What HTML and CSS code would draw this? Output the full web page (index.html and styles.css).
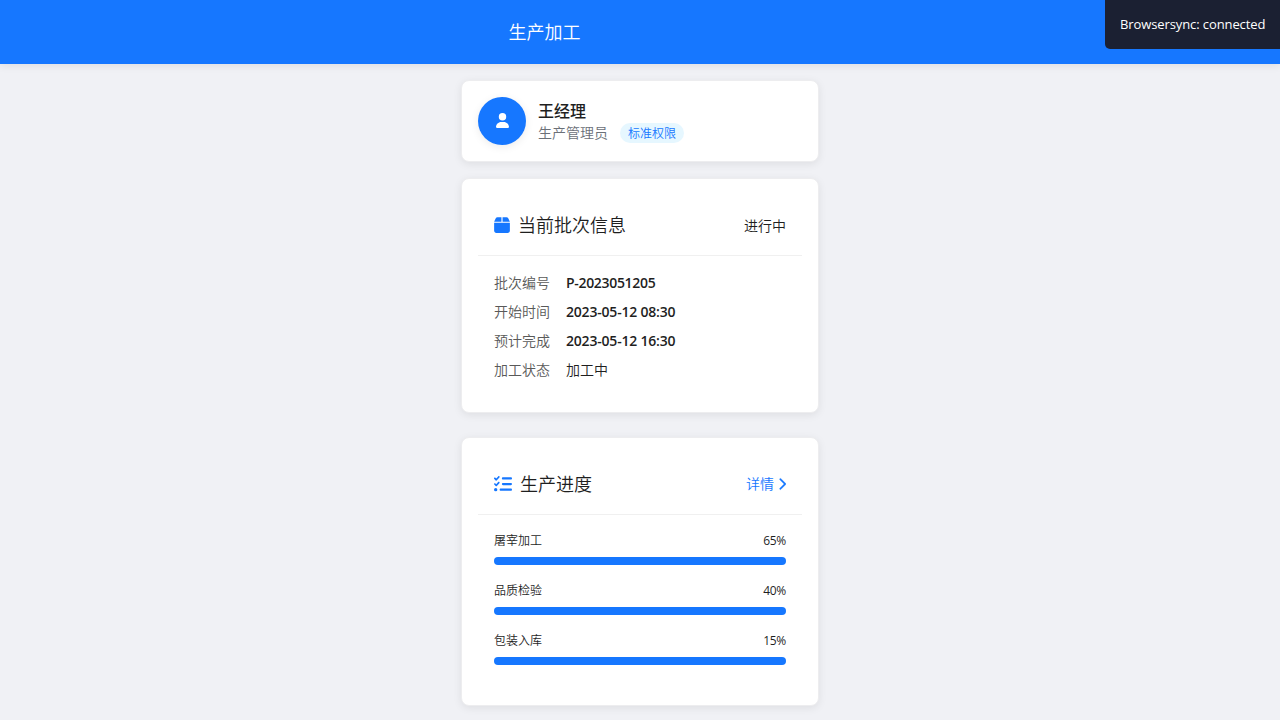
FILE: index.html
```html
<!DOCTYPE html>
<html lang="zh-CN">
<head>
<meta charset="UTF-8">
<title>生产加工</title>
<link rel="stylesheet" href="styles.css">
</head>
<body>
<header class="topbar"><h1 class="topbar-title">生产加工</h1></header>
<div class="sync-notice">Browsersync: connected</div>
<main class="content">
  <section class="card user-card">
    <div class="avatar">
      <svg class="icon-user" viewBox="0 0 448 512"><path d="M224 256A128 128 0 1 0 224 0a128 128 0 1 0 0 256zm-45.700 48C79.800 304 0 383.800 0 482.300C0 498.700 13.300 512 29.700 512H418.300c16.400 0 29.700-13.300 29.700-29.700C448 383.800 368.200 304 269.700 304H178.300z"/></svg>
    </div>
    <div class="user-info">
      <div class="user-name">王经理</div>
      <div class="user-role"><span>生产管理员</span><span class="tag">标准权限</span></div>
    </div>
  </section>
  <section class="card batch-card">
    <div class="card-header">
      <svg class="icon-box" viewBox="0 0 448 512"><path d="M50.700 58.500L0 160H208V32H93.700C75.500 32 58.900 42.300 50.700 58.500zM240 160H448L397.300 58.500C389.100 42.300 372.500 32 354.300 32H240V160zm208 32H0V416c0 35.300 28.700 64 64 64H384c35.300 0 64-28.700 64-64V192z"/></svg>
      <h2 class="card-title">当前批次信息</h2>
      <span class="status">进行中</span>
    </div>
    <dl class="details">
      <dt>批次编号</dt><dd class="batch-no">P-2023051205</dd>
      <dt>开始时间</dt><dd>2023-05-12 08:30</dd>
      <dt>预计完成</dt><dd>2023-05-12 16:30</dd>
      <dt>加工状态</dt><dd class="state">加工中</dd>
    </dl>
  </section>
  <section class="card progress-card">
    <div class="card-header">
      <svg class="icon-list" viewBox="0 0 512 512"><path d="M152.100 38.200c9.900 8.900 10.700 24 1.800 33.900l-72 80c-4.400 4.900-10.600 7.800-17.200 7.900s-12.900-2.400-17.600-7L7 113C-2.300 103.600-2.300 88.400 7 79s24.600-9.400 33.900 0l22.100 22.100 55.100-61.200c8.900-9.900 24-10.700 33.900-1.800zm0 160c9.900 8.900 10.700 24 1.800 33.900l-72 80c-4.400 4.900-10.600 7.800-17.200 7.900s-12.900-2.400-17.600-7L7 273c-9.400-9.400-9.400-24.600 0-33.900s24.600-9.400 33.900 0l22.100 22.100 55.100-61.200c8.900-9.900 24-10.700 33.900-1.800zM224 96c0-17.700 14.300-32 32-32H480c17.700 0 32 14.300 32 32s-14.300 32-32 32H256c-17.700 0-32-14.300-32-32zm0 160c0-17.700 14.300-32 32-32H480c17.700 0 32 14.300 32 32s-14.300 32-32 32H256c-17.700 0-32-14.300-32-32zM160 416c0-17.700 14.300-32 32-32H480c17.700 0 32 14.300 32 32s-14.300 32-32 32H192c-17.700 0-32-14.300-32-32zM48 368a48 48 0 1 1 0 96 48 48 0 1 1 0-96z"/></svg>
      <h2 class="card-title">生产进度</h2>
      <a class="more">详情<svg class="icon-chevron" viewBox="0 0 320 512"><path d="M310.600 233.400c12.500 12.500 12.500 32.800 0 45.300l-192 192c-12.500 12.500-32.800 12.500-45.300 0s-12.500-32.800 0-45.300L242.700 256 73.400 86.600c-12.500-12.500-12.500-32.800 0-45.300s32.800-12.500 45.300 0l192 192z"/></svg></a>
    </div>
    <div class="progress-list">
      <div class="progress-item"><div class="progress-label"><span>屠宰加工</span><span class="percent">65%</span></div><div class="bar"></div></div>
      <div class="progress-item"><div class="progress-label"><span>品质检验</span><span class="percent">40%</span></div><div class="bar"></div></div>
      <div class="progress-item"><div class="progress-label"><span>包装入库</span><span class="percent">15%</span></div><div class="bar"></div></div>
    </div>
  </section>
</main>
</body>
</html>
```
FILE: styles.css
```css
* { box-sizing: border-box; }
html, body { height: 100%; }
body {
  margin: 0;
  overflow: hidden;
  background: #f0f1f5;
  color: #1f1f1f;
  font-family: "Open Sans", "Noto Sans CJK SC", sans-serif;
  font-size: 14px;
  line-height: 21px;
}
h1, h2, dl, dd { margin: 0; }
svg { display: block; flex: none; fill: currentColor; }
.topbar {
  display: flex;
  align-items: center;
  height: 64px;
  padding-left: 508.500px;
  background: #1677ff;
  color: #fff;
  box-shadow: 0 2px 8px rgba(0, 0, 0, .08);
}
.topbar-title { font-size: 18px; font-weight: 350; line-height: 28px; }
.sync-notice {
  position: absolute;
  top: 0;
  right: 0;
  width: 175px;
  height: 49px;
  padding: 15px 0 0 15px;
  border-bottom-left-radius: 5px;
  background: #1b2032;
  color: #fff;
  font-size: 13px;
  line-height: 19px;
  letter-spacing: -.1px;
  white-space: nowrap;
}
.content { width: 358px; margin: 16px auto 0; }
.card {
  border: 1px solid #ededef;
  border-radius: 8px;
  background: #fff;
  box-shadow: 0 2px 8px rgba(0, 0, 0, .08);
}
.user-card { display: flex; align-items: center; gap: 12px; height: 82px; padding: 0 16px; }
.avatar {
  display: flex;
  align-items: center;
  justify-content: center;
  width: 48px;
  height: 48px;
  border-radius: 50%;
  background: #1677ff;
  color: #fff;
  box-shadow: 0 2px 8px rgba(0, 0, 0, .08);
}
.icon-user { width: 13px; height: 15px; margin-bottom: 1px; }
.user-name { font-size: 16px; font-weight: 500; line-height: 24px; }
.user-role { display: flex; align-items: flex-start; gap: 12px; height: 20px; color: #6b7078; font-weight: 350; line-height: 19px; }
.tag {
  height: 20px;
  padding: 0 8px;
  border-radius: 10px;
  background: #e6f7ff;
  color: #1677ff;
  font-size: 12px;
  line-height: 21px;
}
.batch-card { height: 235px; margin-top: 16px; padding: 16px; }
.progress-card { height: 269px; margin-top: 24px; padding: 16px; }
.card-header { display: flex; align-items: center; height: 61px; padding: 0 16px; border-bottom: 1px solid #f0f0f0; }
.icon-box { width: 16px; height: 18px; margin-right: 8px; color: #1677ff; }
.icon-list { width: 18px; height: 18px; margin-right: 8px; color: #1677ff; }
.card-title { flex: 1; font-size: 18px; font-weight: 350; line-height: 28px; }
.more { display: flex; align-items: center; gap: 4px; margin-bottom: 1px; color: #1677ff; }
.icon-chevron { width: 8px; height: 14px; stroke: currentColor; stroke-width: 12; }
.details { display: grid; grid-template-columns: 56px 1fr; gap: 8px 16px; padding: 16px; }
.details dt { color: #595959; font-weight: 350; }
.details dd { font-weight: 600; letter-spacing: -.2px; }
.details .batch-no { letter-spacing: -.32px; }
.details .state { letter-spacing: 0; }
.status, .details .state, .more { font-weight: 350; }
.progress-list { display: grid; gap: 14px; padding: 16px; }
.progress-label { display: flex; justify-content: space-between; height: 18px; margin-bottom: 8px; font-size: 12px; line-height: 20px; font-weight: 350; }
.percent { font-weight: 400; letter-spacing: -.3px; }
.bar { height: 8px; margin-bottom: 2px; border-radius: 4px; background: #1677ff; }
```
